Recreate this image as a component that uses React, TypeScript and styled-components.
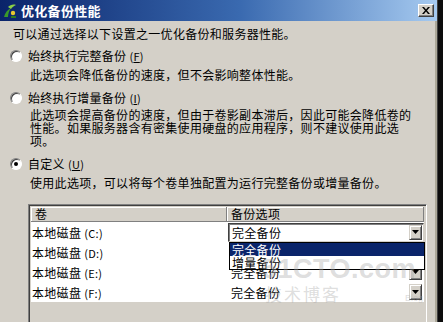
import React from 'react';
import styled, { createGlobalStyle } from 'styled-components';

const GlobalStyle = createGlobalStyle`
  html, body {
    margin: 0;
    padding: 0;
    background: #0c0c0c;
  }
  body {
    font-family: "Noto Sans CJK SC", "Liberation Sans", sans-serif;
  }
`;

type Drive = { name: string; letter: string; mode: string; hidden?: boolean };

const drives: Drive[] = [
  { name: '本地磁盘', letter: 'C', mode: '完全备份' },
  { name: '本地磁盘', letter: 'D', mode: '完全备份', hidden: true },
  { name: '本地磁盘', letter: 'E', mode: '完全备份' },
  { name: '本地磁盘', letter: 'F', mode: '完全备份' },
];

export default function App() {
  return (
    <>
      <GlobalStyle />
      <Window>
        <TitleBar>
          <AppIcon />
          <Title>优化备份性能</Title>
          <CloseButton>
            <svg width="8" height="7" viewBox="0 0 8 7">
              <path d="M0 0h2l2 2.5L6 0h2L5 3.5 8 7H6L4 4.5 2 7H0l3-3.5z" fill="#000" />
            </svg>
          </CloseButton>
        </TitleBar>
        <Body>
          <Intro>可以通过选择以下设置之一优化备份和服务器性能。</Intro>

          <OptionRow $top={6}>
            <Radio />
            <span>始终执行完整备份 <Key>(<u>F</u>)</Key></span>
          </OptionRow>
          <Desc $top={3}>此选项会降低备份的速度，但不会影响整体性能。</Desc>

          <OptionRow $top={7}>
            <Radio />
            <span>始终执行增量备份 <Key>(<u>I</u>)</Key></span>
          </OptionRow>
          <Desc $top={2} $tight>
            此选项会提高备份的速度，但由于卷影副本滞后，因此可能会降低卷的
            <br />
            性能。如果服务器含有密集使用硬盘的应用程序，则不建议使用此选
            <br />
            项。
          </Desc>

          <OptionRow $top={9}>
            <Radio $checked />
            <span>自定义 <Key>(<u>U</u>)</Key></span>
          </OptionRow>
          <Desc $top={3}>使用此选项，可以将每个卷单独配置为运行完整备份或增量备份。</Desc>

          <ListBox>
            <HeaderRow>
              <HeaderCell $width={198}>卷</HeaderCell>
              <HeaderCell $width={199}>备份选项</HeaderCell>
            </HeaderRow>
            <Rows>
              {drives.map((d, i) => (
                <Row key={d.letter}>
                  <NameCell>
                    {d.name} <Key>({d.letter}:)</Key>
                  </NameCell>
                  <ModeCell>
                    {i === 0 ? (
                      <Combo>
                        <span>{d.mode}</span>
                        <ArrowButton $inset>
                          <Arrow />
                        </ArrowButton>
                      </Combo>
                    ) : d.hidden ? null : (
                      <PlainMode>
                        <span>{d.mode}</span>
                        <ArrowButton>
                          <Arrow />
                        </ArrowButton>
                      </PlainMode>
                    )}
                  </ModeCell>
                </Row>
              ))}
            </Rows>
            <DropList>
              <DropItem $selected>完全备份</DropItem>
              <DropItem>增量备份</DropItem>
            </DropList>
            <Watermark>
              <MarkBig>51CTO.com</MarkBig>
              <MarkSmall>
                技术博客<MarkBlog>Blog</MarkBlog>
              </MarkSmall>
            </Watermark>
          </ListBox>
        </Body>
      </Window>
    </>
  );
}

const AppIcon = () => (
  <svg width="16" height="16" viewBox="0 0 16 16">
    <path d="M2 14c1-4 3-7 7-9-2 3-3 6-3 9z" fill="#3a9a2a" />
    <path d="M6 4c2-2 5-3 8-2-2 1-4 2-5 4z" fill="#8cd048" />
    <circle cx="11" cy="10" r="2.2" fill="#e8c830" />
    <path d="M9 13h5v2H9z" fill="#2c7a20" />
  </svg>
);

const Arrow = () => (
  <svg width="7" height="4" viewBox="0 0 7 4">
    <path d="M0 0h7L3.5 4z" fill="#000" />
  </svg>
);

const Window = styled.div`
  width: 437px;
  height: 322px;
  overflow: hidden;
  background: #d4d0c8;
  border-right: 1px solid #404040;
  box-shadow: inset -2px 0 0 #aca899;
  position: relative;
`;

const TitleBar = styled.div`
  height: 21px;
  display: flex;
  align-items: center;
  padding: 0 3px 0 2px;
  background: linear-gradient(to right, #0a246a 0%, #3a6ab0 55%, #a6caf0 100%);
`;

const Title = styled.div`
  flex: 1;
  margin-left: 3px;
  color: #fff;
  font-weight: 700;
  font-size: 13px;
  letter-spacing: 0.3px;
`;

const CloseButton = styled.div`
  width: 16px;
  height: 13px;
  box-sizing: border-box;
  display: flex;
  align-items: center;
  justify-content: center;
  background: #d4d0c8;
  border: 1px solid;
  border-color: #fff #404040 #404040 #fff;
  box-shadow: inset -1px -1px 0 #808080;
`;

const Body = styled.div`
  padding-left: 13px;
  font-size: 12px;
  color: #000;
  letter-spacing: 0.3px;
`;

const Intro = styled.div`
  margin-top: 5px;
  line-height: 16px;
`;

const OptionRow = styled.div<{ $top: number }>`
  margin-top: ${(p) => p.$top}px;
  display: flex;
  align-items: center;
  gap: 6px;
  line-height: 16px;
  margin-left: -3px;
`;

const Radio = styled.span<{ $checked?: boolean }>`
  width: 12px;
  height: 12px;
  box-sizing: border-box;
  border-radius: 50%;
  background: #fff;
  border: 1px solid;
  border-color: #808080 #fff #fff #808080;
  box-shadow: inset 1px 1px 0 #404040;
  display: flex;
  align-items: center;
  justify-content: center;
  &::after {
    content: '';
    width: 4px;
    height: 4px;
    border-radius: 50%;
    background: ${(p) => (p.$checked ? '#000' : 'transparent')};
  }
`;

const Key = styled.span`
  font-size: 11px;
`;

const Desc = styled.div<{ $top: number; $tight?: boolean }>`
  margin-top: ${(p) => p.$top}px;
  margin-left: 17px;
  line-height: ${(p) => (p.$tight ? 13 : 16)}px;
`;

const ListBox = styled.div`
  position: relative;
  margin-top: 13px;
  margin-left: 15px;
  width: 399px;
  height: 130px;
  box-sizing: border-box;
  border: 1px solid;
  border-color: #808080 #fff #fff #808080;
  box-shadow: inset 1px 1px 0 #404040, inset -1px 0 0 #d4d0c8;
  padding: 2px 2px 0 2px;
  background: #d4d0c8;
`;

const HeaderRow = styled.div`
  display: flex;
  height: 15px;
`;

const HeaderCell = styled.div<{ $width: number }>`
  width: ${(p) => p.$width}px;
  box-sizing: border-box;
  padding-left: 4px;
  line-height: 14px;
  background: #d4d0c8;
  border-right: 1px solid #808080;
  border-bottom: 1px solid #808080;
  box-shadow: inset 1px 1px 0 #fff;
`;

const Rows = styled.div`
  background: #fff;
  display: flex;
  flex-direction: column;
`;

const Row = styled.div`
  display: flex;
  height: 20px;
  align-items: center;
`;

const NameCell = styled.div`
  width: 198px;
  padding-left: 1px;
`;

const ModeCell = styled.div`
  flex: 1;
  height: 100%;
  display: flex;
  align-items: center;
`;

const Combo = styled.div`
  width: 196px;
  height: 19px;
  box-sizing: border-box;
  display: flex;
  align-items: center;
  justify-content: space-between;
  padding: 0 1px 0 3px;
  background: #fff;
  border: 1px solid;
  border-color: #404040 #d4d0c8 #d4d0c8 #404040;
  box-shadow: inset 1px 1px 0 #808080;
`;

const PlainMode = styled.div`
  width: 196px;
  display: flex;
  align-items: center;
  justify-content: space-between;
  padding: 0 2px 0 3px;
  box-sizing: border-box;
`;

const ArrowButton = styled.div<{ $inset?: boolean }>`
  width: 13px;
  height: ${(p) => (p.$inset ? 15 : 16)}px;
  box-sizing: border-box;
  display: flex;
  align-items: center;
  justify-content: center;
  background: #d4d0c8;
  border: 1px solid;
  border-color: #d4d0c8 #404040 #404040 #d4d0c8;
  box-shadow: inset 1px 1px 0 #fff, inset -1px -1px 0 #808080;
`;

const DropList = styled.div`
  position: absolute;
  left: 200px;
  top: 37px;
  width: 196px;
  box-sizing: border-box;
  border: 1px solid #000;
  background: #fff;
`;

const DropItem = styled.div<{ $selected?: boolean }>`
  height: 13px;
  line-height: 13px;
  padding-left: 2px;
  background: ${(p) => (p.$selected ? '#0a246a' : '#fff')};
  color: ${(p) => (p.$selected ? '#fff' : '#000')};
`;

const Watermark = styled.div`
  position: absolute;
  left: 233px;
  top: 50px;
  pointer-events: none;
  color: rgba(170, 170, 170, 0.4);
  font-family: "Liberation Sans", sans-serif;
`;

const MarkBig = styled.div`
  font-size: 27px;
  font-weight: 700;
  letter-spacing: 0.5px;
  line-height: 28px;
`;

const MarkSmall = styled.div`
  font-family: "Noto Sans CJK SC", sans-serif;
  font-size: 17px;
  line-height: 22px;
  margin-left: 3px;
  letter-spacing: 2px;
`;

const MarkBlog = styled.span`
  font-family: "Liberation Sans", sans-serif;
  font-size: 9px;
  margin-left: 64px;
  letter-spacing: 0;
`;
